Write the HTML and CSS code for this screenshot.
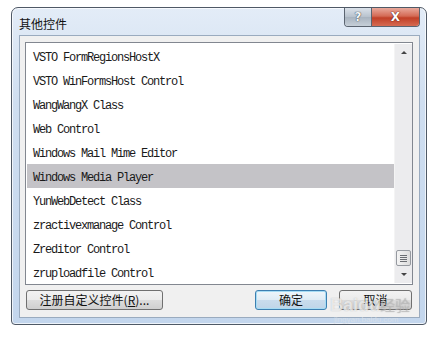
FILE: index.html
```html
<!DOCTYPE html>
<html lang="zh-CN">

<head>
  <meta charset="UTF-8">
  <title>其他控件</title>
  <link rel="stylesheet" href="styles.css">
</head>

<body>

  <div class="window">
    <div class="titlebar">
      <span class="title">其他控件</span>
      <div class="caption-buttons">
        <div class="cap-btn help">?</div>
        <div class="cap-btn close">X</div>
      </div>
    </div>

    <div class="client">
      <div class="listbox">
        <ul class="items">
          <li>VSTO FormRegionsHostX</li>
          <li>VSTO WinFormsHost Control</li>
          <li>WangWangX Class</li>
          <li>Web Control</li>
          <li>Windows Mail Mime Editor</li>
          <li class="selected">Windows Media Player</li>
          <li>YunWebDetect Class</li>
          <li>zractivexmanage Control</li>
          <li>Zreditor Control</li>
          <li>zruploadfile Control</li>
        </ul>
        <div class="scrollbar">
          <div class="arrow up"></div>
          <div class="track">
            <div class="thumb"><span></span><span></span><span></span><span></span></div>
          </div>
          <div class="arrow down"></div>
        </div>
      </div>

      <div class="buttons">
        <button class="btn register">注册自定义控件(<u>R</u>)...</button>
        <button class="btn ok">确定</button>
        <button class="btn cancel">取消</button>
      </div>
    </div>

    <div class="watermark">Baidu<span>经验</span><small>jingyan.baidu.com</small></div>
  </div>

</body>

</html>
```

FILE: styles.css
```css
body {
  margin: 0;
  background-color: #ffffff;
  font-family: 'Noto Sans CJK SC', sans-serif;
}

.window {
  position: relative;
  box-sizing: border-box;
  width: 416px;
  height: 318px;
  margin: 7px 0 0 11px;
  border: 1px solid #4f5966;
  border-radius: 7px 7px 4px 4px;
  background: linear-gradient(to bottom, #e3ecf7 0%, #cfdef0 30%, #c3d6ed 100%);
  box-shadow: inset 0 0 0 1px rgba(255, 255, 255, 0.7);
  display: flex;
  flex-direction: column;
}

.titlebar {
  height: 28px;
  display: flex;
  align-items: center;
  justify-content: space-between;
  padding-left: 7px;
}

.title {
  font-size: 12px;
  color: #111;
  margin-top: 3px;
}

.caption-buttons {
  display: flex;
  align-self: flex-start;
  margin-right: 6px;
  border: 1px solid #5b6470;
  border-top: none;
  border-radius: 0 0 4px 4px;
  overflow: hidden;
  height: 18px;
}

.cap-btn {
  display: flex;
  align-items: center;
  justify-content: center;
  font-family: 'DejaVu Sans', sans-serif;
  font-weight: bold;
  color: #fff;
}

.cap-btn.help {
  width: 26px;
  font-size: 12px;
  color: #f4f6f8;
  text-shadow: 0 0 1px #3a4048, 0 0 1px #3a4048;
  background: linear-gradient(to bottom, #dbe2ea, #b7c1cc 50%, #a8b3bf 51%, #c6cfd8);
  border-right: 1px solid #5b6470;
}

.cap-btn.close {
  width: 47px;
  font-size: 12px;
  text-shadow: 0 0 1px #5a1a10, 0 0 1px #5a1a10;
  background: linear-gradient(to bottom, #e9a99c, #d46a55 45%, #c13f27 55%, #d66b52);
}

.client {
  flex: 1;
  margin: 0 6px 6px 7px;
  border: 1px solid #9aabbf;
  background-color: #f0f0f0;
  padding: 6px 6px 7px 5px;
  display: flex;
  flex-direction: column;
}

.listbox {
  display: flex;
  height: 243px;
  box-sizing: border-box;
  border: 1px solid #828790;
  background-color: #fff;
  padding: 1px 0 1px 1px;
}

.items {
  flex: 1;
  list-style: none;
  margin: 0;
  padding: 0;
}

.items li {
  box-sizing: border-box;
  height: 24px;
  line-height: 20px;
  padding: 4px 0 0 6px;
  font-family: 'Liberation Mono', monospace;
  font-size: 12px;
  letter-spacing: -1.2px;
  color: #1a1a1a;
  white-space: nowrap;
}

.items li.selected {
  background-color: #c4c3c7;
}

.scrollbar {
  width: 17px;
  display: flex;
  flex-direction: column;
  background-color: #ececee;
  border-left: 1px solid #f4f4f4;
}

.arrow {
  height: 17px;
  display: flex;
  align-items: center;
  justify-content: center;
}

.arrow::after {
  content: '';
  border-left: 3px solid transparent;
  border-right: 3px solid transparent;
}

.arrow.up::after {
  border-bottom: 3px solid #444;
}

.arrow.down::after {
  border-top: 3px solid #444;
}

.track {
  flex: 1;
  display: flex;
  flex-direction: column;
  justify-content: flex-end;
  align-items: center;
}

.thumb {
  box-sizing: border-box;
  width: 15px;
  height: 16px;
  border: 1px solid #969aa0;
  border-radius: 2px;
  background: linear-gradient(to right, #f4f4f4, #dcdcdc);
  display: flex;
  flex-direction: column;
  justify-content: center;
  gap: 1px;
  padding: 0 3px;
}

.thumb span {
  height: 1px;
  background-color: #6a6d72;
}

.buttons {
  display: flex;
  align-items: center;
  margin-top: 5px;
  gap: 12px;
}

.btn {
  height: 20px;
  box-sizing: border-box;
  padding: 0;
  border: 1px solid #707070;
  border-radius: 3px;
  background: linear-gradient(to bottom, #f2f2f2 0%, #ebebeb 50%, #dddddd 51%, #cfcfcf 100%);
  font-family: 'Noto Sans CJK SC', sans-serif;
  font-size: 12px;
  line-height: 16px;
  color: #111;
}

.btn.register {
  width: 137px;
  margin-left: 1px;
  margin-right: 80px;
}

.btn.ok {
  width: 72px;
  border-color: #3c7fb1;
  background: linear-gradient(to bottom, #eef6fb 0%, #dfecf5 50%, #c9dced 51%, #bfd5e8 100%);
  box-shadow: inset 0 0 0 1px #a6dcf4;
}

.btn.cancel {
  width: 73px;
}

.watermark {
  position: absolute;
  left: 318px;
  top: 287px;
  font-family: 'Liberation Sans', sans-serif;
  font-size: 18px;
  font-weight: bold;
  color: rgba(255, 255, 255, 0.7);
  text-shadow: 0 0 1px rgba(120, 120, 120, 0.5);
  white-space: nowrap;
  line-height: 20px;
}

.watermark span {
  font-family: 'Noto Sans CJK SC', sans-serif;
  font-size: 15px;
  font-weight: normal;
  color: rgba(200, 200, 200, 0.55);
}

.watermark small {
  display: block;
  font-size: 8px;
  font-weight: normal;
  line-height: 10px;
  margin-left: 4px;
  color: rgba(220, 225, 232, 0.8);
  text-shadow: none;
}
```
